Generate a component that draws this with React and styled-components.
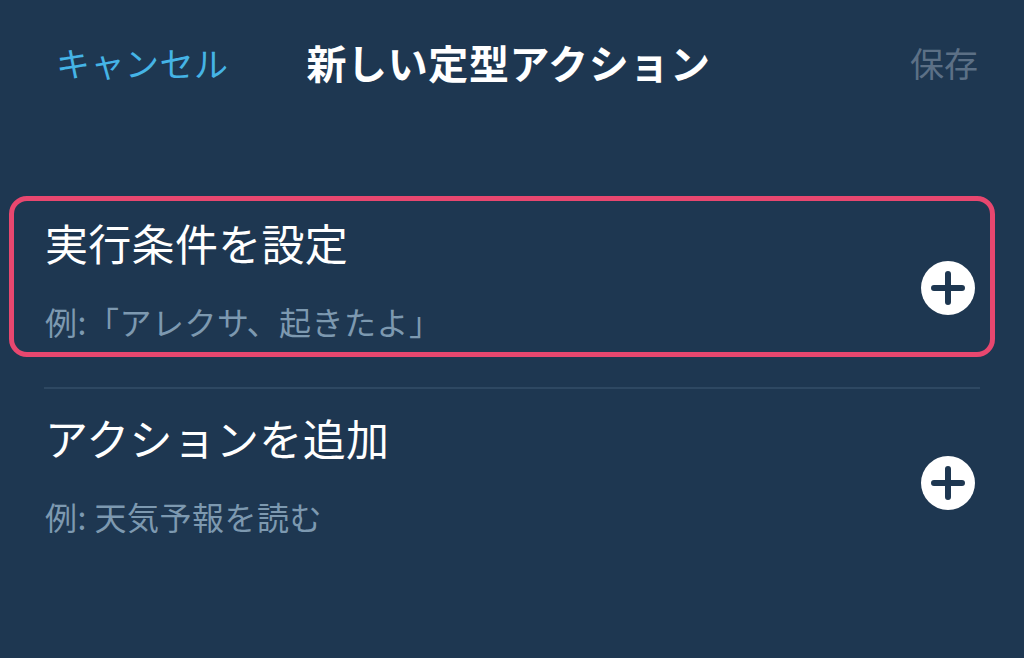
import React from 'react';
import styled, { createGlobalStyle } from 'styled-components';

const GlobalStyle = createGlobalStyle`
    html, body {
        margin: 0;
        padding: 0;
        background: #1e3751;
    }
    body {
        font-family: "Noto Sans CJK JP", "Noto Sans", sans-serif;
    }
`;

const Screen = styled.div`
    width: 1024px;
    height: 658px;
    background: #1e3751;
    overflow: hidden;
`;

const Header = styled.div`
    height: 124px;
    display: flex;
    align-items: center;
    padding: 0 46px 0 56px;
`;

const Cancel = styled.span`
    font-size: 34px;
    color: #45b4e6;
    letter-spacing: 0.5px;
`;

const Title = styled.span`
    font-size: 40px;
    font-weight: 700;
    color: #ffffff;
    margin-left: 78px;
    flex: 1;
    letter-spacing: 0.6px;
`;

const Save = styled.span`
    font-size: 34px;
    color: #5c7086;
`;

const Content = styled.div`
    padding: 72px 29px 0 9px;
    display: flex;
    flex-direction: column;
`;

const Row = styled.div`
    display: flex;
    align-items: center;
    justify-content: space-between;
    border: 5px solid ${(p) => (p.highlighted ? '#e8476f' : 'transparent')};
    border-radius: 18px;
    padding: 0 15px 0 31px;
`;

const RowText = styled.div`
    display: flex;
    flex-direction: column;
    padding: 15px 0 13px 0;
`;

const RowTitle = styled.div`
    font-size: 43px;
    line-height: 52px;
    color: #ffffff;
    letter-spacing: 0.3px;
`;

const RowExample = styled.div`
    font-size: 32px;
    line-height: 36px;
    color: #7d99b0;
    margin-top: 35px;
    letter-spacing: 0.5px;
    white-space: pre;
`;

const PlusButton = styled.div`
    width: 54px;
    height: 54px;
    border-radius: 50%;
    background: #ffffff;
    display: flex;
    align-items: center;
    justify-content: center;
    margin-top: 22px;
`;

const Divider = styled.div`
    height: 2px;
    background: #2e4862;
    margin: 30px 15px 2px 35px;
`;

const Plus = () => (
    <PlusButton>
        <svg width="34" height="34" viewBox="0 0 34 34">
            <path d="M17 3 V31 M3 17 H31" stroke="#1e3751" strokeWidth="6" strokeLinecap="round" />
        </svg>
    </PlusButton>
);

export default function App() {
    return (
        <Screen>
            <GlobalStyle />
            <Header>
                <Cancel>キャンセル</Cancel>
                <Title>新しい定型アクション</Title>
                <Save>保存</Save>
            </Header>
            <Content>
                <Row highlighted>
                    <RowText>
                        <RowTitle>実行条件を設定</RowTitle>
                        <RowExample>例:「アレクサ、起きたよ」</RowExample>
                    </RowText>
                    <Plus />
                </Row>
                <Divider />
                <Row>
                    <RowText>
                        <RowTitle>アクションを追加</RowTitle>
                        <RowExample>例: 天気予報を読む</RowExample>
                    </RowText>
                    <Plus />
                </Row>
            </Content>
        </Screen>
    );
}
